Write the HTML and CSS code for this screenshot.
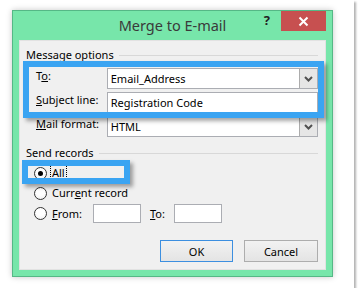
FILE: index.html
```html
<!DOCTYPE html>
<html>
<head>
<meta charset="utf-8">
<link rel="stylesheet" href="styles.css">
</head>
<body>
<div class="page">
  <div class="window">
    <div class="titlebar">
      <div></div>
      <div class="title">Merge to E-mail</div>
      <div class="controls">
        <span class="help">?</span>
        <span class="close"><svg width="11" height="11" viewBox="0 0 11 11"><path d="M1.5 1.5L9.5 9.5M9.5 1.5L1.5 9.5" stroke="#fff" stroke-width="2" fill="none"/></svg></span>
      </div>
    </div>
    <div class="panel">
      <div class="legend"><span>Message options</span><i class="rule"></i></div>
      <div class="fields">
        <div class="row">
          <span class="label">T<u>o</u>:</span>
          <div class="field combo"><span class="value">Email_Address</span><span class="drop"><svg width="9" height="6" viewBox="0 0 9 6"><path d="M1 1L4.5 4.5L8 1" stroke="#505050" stroke-width="2" fill="none"/></svg></span></div>
        </div>
        <div class="row">
          <span class="label"><u>S</u>ubject line:</span>
          <div class="field"><span class="value">Registration Code</span></div>
        </div>
        <div class="row">
          <span class="label"><u>M</u>ail format:</span>
          <div class="field combo"><span class="value">HTML</span><span class="drop"><svg width="9" height="6" viewBox="0 0 9 6"><path d="M1 1L4.5 4.5L8 1" stroke="#505050" stroke-width="2" fill="none"/></svg></span></div>
        </div>
      </div>
      <div class="legend send"><span>Send records</span><i class="rule"></i></div>
      <div class="radios">
        <div class="radio-row"><span class="radio checked"></span><span class="rlabel focus"><u>A</u>ll</span></div>
        <div class="radio-row"><span class="radio"></span><span class="rlabel">Curr<u>e</u>nt record</span></div>
        <div class="radio-row last"><span class="radio"></span><span class="rlabel from-label"><u>F</u>rom:</span><span class="box"></span><span class="to-label"><u>T</u>o:</span><span class="box"></span></div>
      </div>
      <div class="buttons">
        <button class="btn ok">OK</button>
        <button class="btn">Cancel</button>
      </div>
      <div class="hl hl1"></div>
      <div class="hl hl2"></div>
    </div>
  </div>
</div>
</body>
</html>
```
FILE: styles.css
```css
html, body {
  margin: 0;
  background: #fff;
}
body {
  font-family: "Noto Sans", "Open Sans", sans-serif;
  font-size: 11px;
  color: #000;
}
.page {
  width: 354px;
  height: 288px;
  box-sizing: border-box;
  padding: 10px 0 0 12px;
  background: #fff;
  box-shadow: 2px 2px 2px rgba(0, 0, 0, 0.3);
}
.window {
  width: 321px;
  height: 267px;
  box-sizing: border-box;
  border: 1px solid #55b886;
  background: #77e6aa;
  box-shadow: 0 0 6px rgba(0, 0, 0, 0.22);
  display: flex;
  flex-direction: column;
}
.titlebar {
  height: 29px;
  flex: none;
  display: grid;
  grid-template-columns: 1fr auto 1fr;
}
.title {
  font-size: 14.5px;
  line-height: 29px;
  color: #3a3a3a;
  white-space: nowrap;
}
.controls {
  display: flex;
  justify-content: flex-end;
  align-items: flex-start;
}
.help {
  font-weight: bold;
  font-size: 13px;
  line-height: 18px;
  margin-right: 11px;
  color: #222;
}
.close {
  width: 45px;
  height: 20px;
  background: #c75050;
  display: flex;
  align-items: center;
  justify-content: center;
  margin-right: 6px;
}
.panel {
  position: relative;
  flex: 1;
  margin: 0 6px 6px;
  background: #f0f0f0;
  box-shadow: inset 0 0 0 1px #e2e2e2;
  padding: 7px 8px 8px 0;
  box-sizing: border-box;
}
.legend {
  display: flex;
  align-items: center;
  line-height: 16px;
  height: 16px;
  padding-left: 7px;
}
.legend.send {
  margin-top: 8px;
}
.rule {
  flex: 1;
  height: 1px;
  background: #d8d8d8;
  margin-left: 5px;
}
.fields {
  margin-top: 5px;
  padding-left: 17px;
  display: flex;
  flex-direction: column;
  gap: 3px;
}
.row {
  display: flex;
  height: 21px;
}
.label {
  width: 71px;
  line-height: 16px;
}
.field {
  width: 212px;
  height: 21px;
  box-sizing: border-box;
  border: 1px solid #abadb3;
  background: #fff;
  display: flex;
}
.value {
  flex: 1;
  padding-left: 3px;
  line-height: 19px;
}
.drop {
  width: 17px;
  border-left: 1px solid #acacac;
  background: #e6e6e6;
  display: flex;
  align-items: center;
  justify-content: center;
}
.radios {
  margin-top: 2px;
  padding-left: 15px;
}
.radio-row {
  display: flex;
  align-items: center;
  height: 20px;
}
.radio-row.last {
  height: 21px;
}
.radio {
  width: 13px;
  height: 13px;
  box-sizing: border-box;
  border: 1px solid #333;
  border-radius: 50%;
  background: radial-gradient(circle at 50% 35%, #fff 40%, #ececec);
  margin-right: 4px;
  display: flex;
  align-items: center;
  justify-content: center;
}
.radio.checked::after {
  content: "";
  width: 5px;
  height: 5px;
  border-radius: 50%;
  background: #000;
}
.rlabel {
  padding: 0 1px;
  line-height: 14px;
}
.focus {
  outline: 1px dotted #000;
}
.from-label {
  width: 42px;
  box-sizing: border-box;
}
.box {
  width: 48px;
  height: 19px;
  box-sizing: border-box;
  border: 1px solid #abadb3;
  background: #fff;
}
.to-label {
  margin-left: 9px;
  width: 24px;
}
.buttons {
  margin-top: 16px;
  display: flex;
  justify-content: flex-end;
  gap: 11px;
}
.btn {
  width: 74px;
  height: 22px;
  box-sizing: border-box;
  border: 1px solid #adadad;
  background: linear-gradient(#f2f2f2, #e4e4e4);
  font-family: inherit;
  font-size: 11px;
  color: #000;
  padding: 0;
}
.btn.ok {
  width: 73px;
  border-color: #3c8fe0;
}
.hl {
  position: absolute;
  box-sizing: border-box;
  border: 6px solid #3aa4f2;
  box-shadow: 3px 3px 4px rgba(0, 0, 0, 0.35);
}
.hl1 {
  left: 4px;
  top: 21px;
  width: 301px;
  height: 57px;
}
.hl2 {
  left: 3px;
  top: 120px;
  width: 108px;
  height: 24px;
}
```
